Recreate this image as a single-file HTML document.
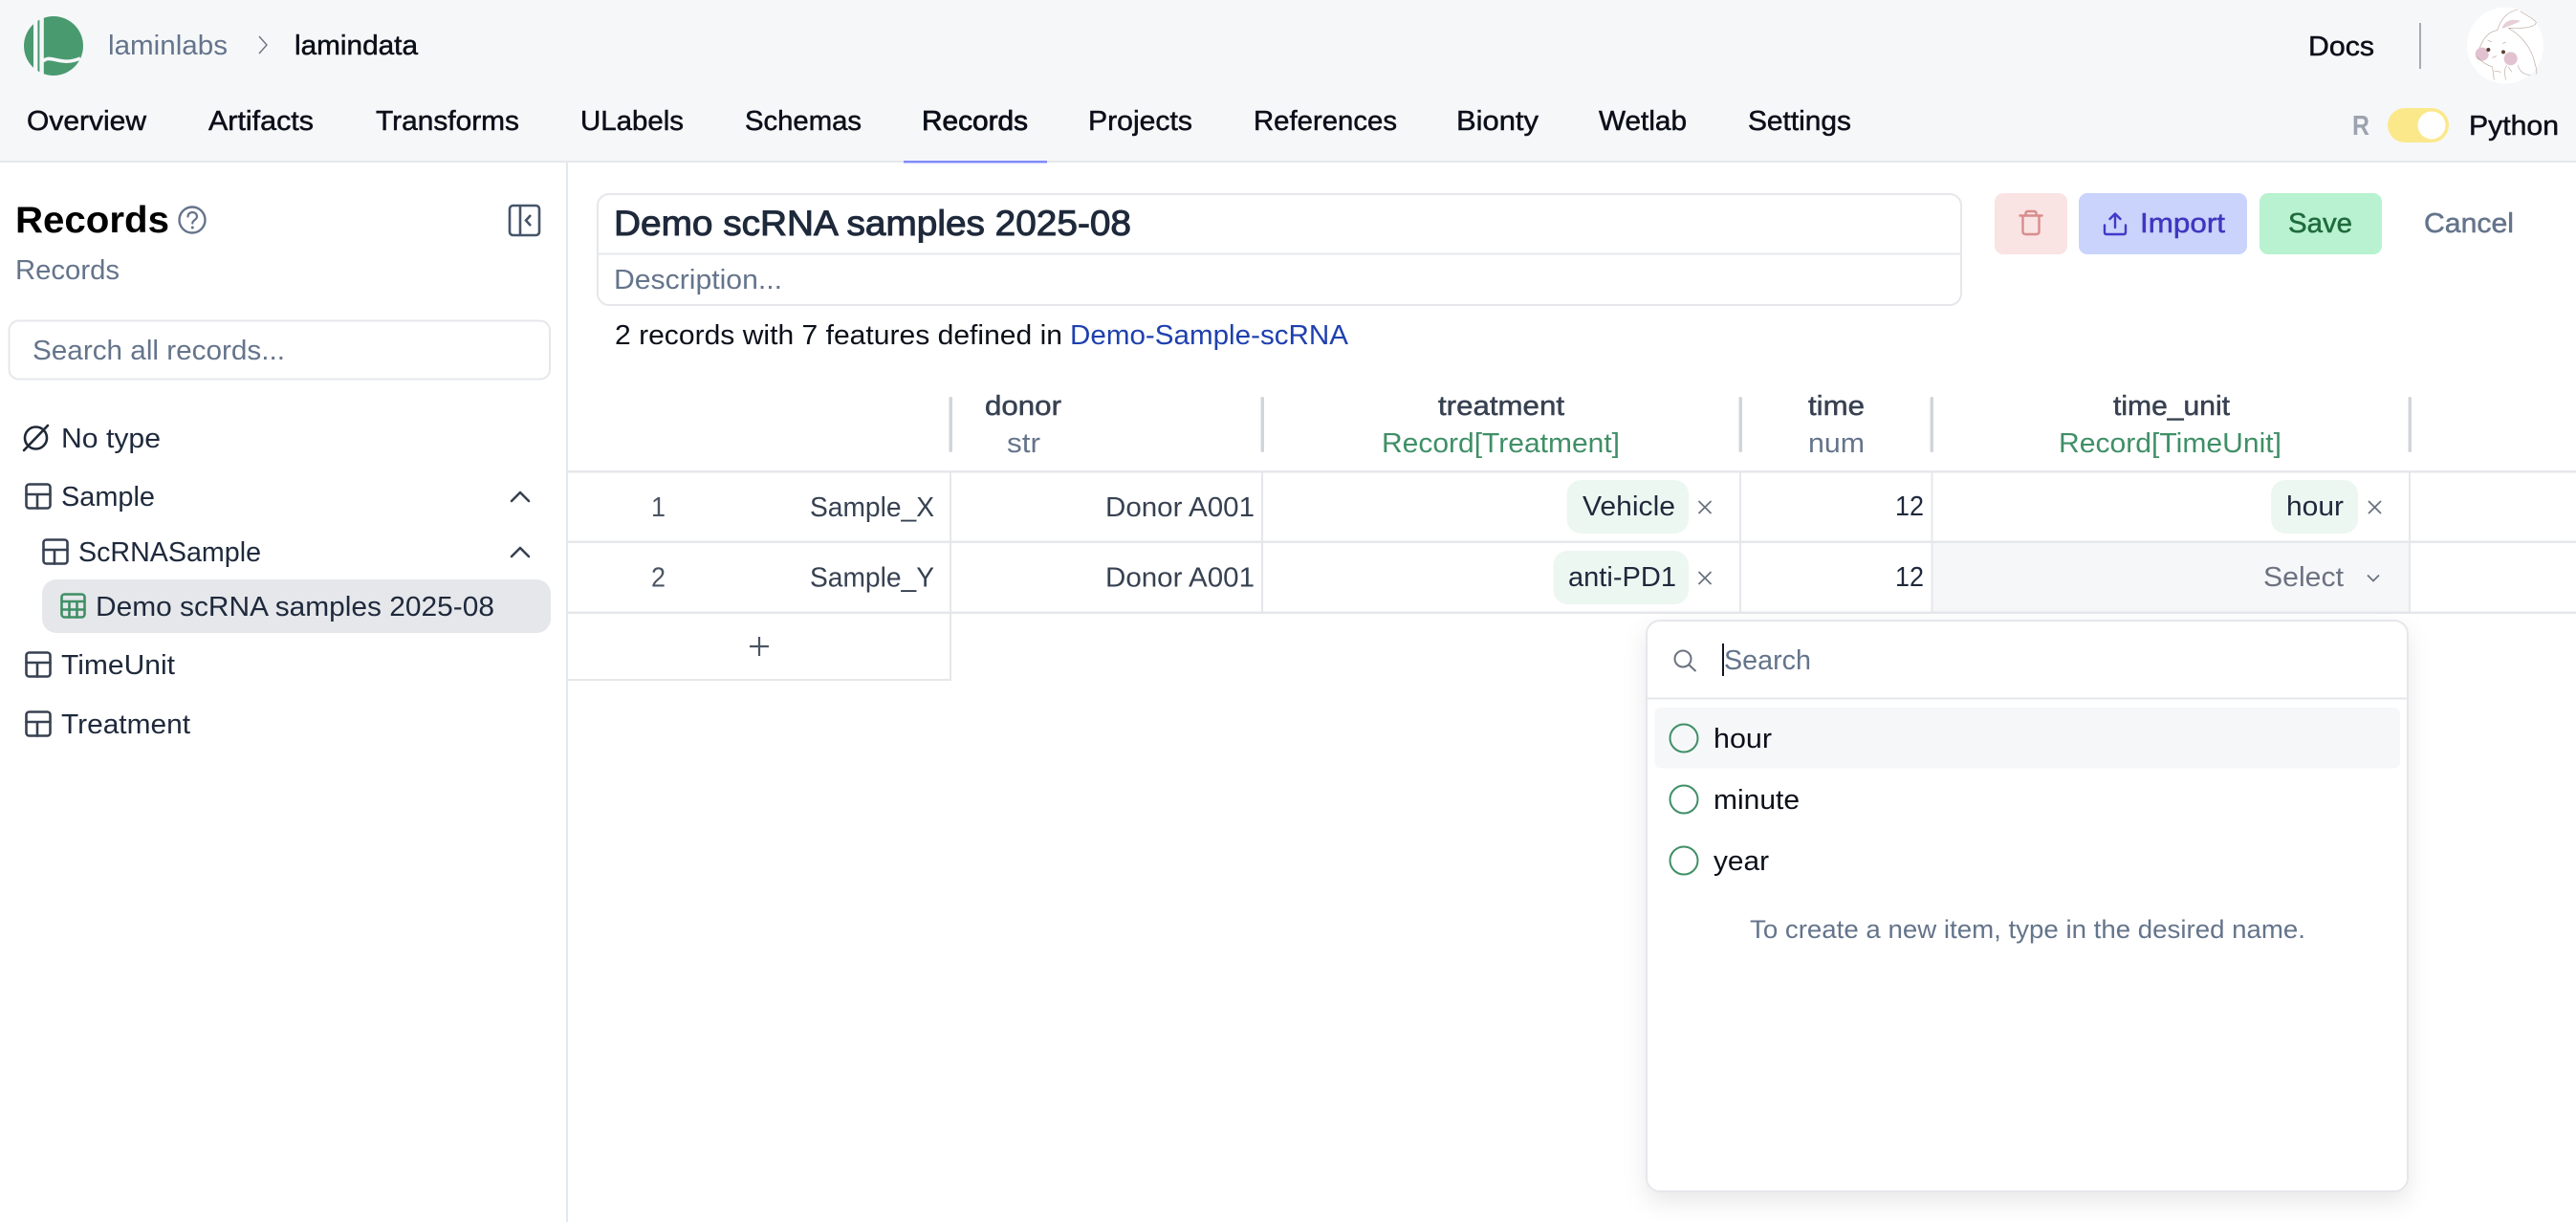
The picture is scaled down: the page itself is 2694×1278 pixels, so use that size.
<!DOCTYPE html>
<html lang="en">
<head>
<meta charset="utf-8">
<title>Records</title>
<style>
html,body{margin:0;padding:0;background:#fff;width:2694px;height:1278px;overflow:hidden}
svg{display:block}
text{font-family:"Liberation Sans",sans-serif;font-size:29px;fill:#1e293b}
.m{stroke-width:.5px;paint-order:stroke}
.g{fill:#64748b}
.k{fill:#0b0f19}
.gr{fill:#3f8f66}
.ic{fill:none;stroke:#374151;stroke-width:2.6;stroke-linecap:round;stroke-linejoin:round}
</style>
</head>
<body>
<svg width="2694" height="1278" viewBox="0 0 2694 1278" xmlns="http://www.w3.org/2000/svg">
<rect width="2694" height="1278" fill="#fff"/>
<!-- header -->
<rect width="2694" height="169" fill="#f6f7f9"/>
<rect y="168" width="2694" height="2" fill="#e5e7eb"/>
<rect x="945" y="168" width="150" height="2.5" fill="#818cf8"/>
<!-- logo -->
<circle cx="56" cy="48" r="31" fill="#4a9a70"/>
<rect x="35" y="14" width="4.4" height="68" fill="#f6f7f9"/>
<rect x="41.4" y="14" width="4.4" height="68" fill="#f6f7f9"/>
<path d="M45 64 C53 56,63 70,84 61" fill="none" stroke="#f6f7f9" stroke-width="3.6"/>
<text x="113" y="57" textLength="125" lengthAdjust="spacingAndGlyphs" style="fill:#64748b">laminlabs</text>
<path d="M271 38 L279 47 L271 56" fill="none" stroke="#6b7280" stroke-width="1.4"/>
<text x="308" y="57" textLength="129" lengthAdjust="spacingAndGlyphs" class="k m" stroke="#0b0f19">lamindata</text>
<text x="28" y="136" textLength="125" lengthAdjust="spacingAndGlyphs" class="k m" stroke="#0b0f19">Overview</text>
<text x="218" y="136" textLength="110" lengthAdjust="spacingAndGlyphs" class="k m" stroke="#0b0f19">Artifacts</text>
<text x="393" y="136" textLength="150" lengthAdjust="spacingAndGlyphs" class="k m" stroke="#0b0f19">Transforms</text>
<text x="607" y="136" textLength="108" lengthAdjust="spacingAndGlyphs" class="k m" stroke="#0b0f19">ULabels</text>
<text x="779" y="136" textLength="122" lengthAdjust="spacingAndGlyphs" class="k m" stroke="#0b0f19">Schemas</text>
<text x="964" y="136" textLength="111" lengthAdjust="spacingAndGlyphs" class="k" stroke="#0b0f19" stroke-width=".8">Records</text>
<text x="1138" y="136" textLength="109" lengthAdjust="spacingAndGlyphs" class="k m" stroke="#0b0f19">Projects</text>
<text x="1311" y="136" textLength="150" lengthAdjust="spacingAndGlyphs" class="k m" stroke="#0b0f19">References</text>
<text x="1523" y="136" textLength="86" lengthAdjust="spacingAndGlyphs" class="k m" stroke="#0b0f19">Bionty</text>
<text x="1672" y="136" textLength="92" lengthAdjust="spacingAndGlyphs" class="k m" stroke="#0b0f19">Wetlab</text>
<text x="1828" y="136" textLength="108" lengthAdjust="spacingAndGlyphs" class="k m" stroke="#0b0f19">Settings</text>
<text x="2414" y="58" textLength="69" lengthAdjust="spacingAndGlyphs" class="k m" stroke="#0b0f19">Docs</text>
<rect x="2530" y="24" width="2" height="48" fill="#a8abb2"/>
<!-- avatar -->
<g transform="translate(2560 0) scale(.33333)">
<circle cx="180" cy="143" r="120" fill="#fff"/>
<path d="M170 90 C174 70 196 55 228 66 C218 72 196 80 170 90Z" fill="#e6cfd9"/>
<circle cx="107" cy="170" r="21" fill="#e2c2d0"/>
<circle cx="197" cy="184" r="21" fill="#e2c2d0"/>
<circle cx="127" cy="156" r="6" fill="#5b4032"/>
<circle cx="174" cy="163" r="6" fill="#5b4032"/>
<path d="M155 95 C165 65 180 40 218 30 M228 36 C250 50 270 60 277 70 C275 85 240 90 190 88 C230 110 262 150 272 195 C278 215 280 228 278 232 M155 95 C130 98 112 118 100 150 M92 178 C105 195 125 205 140 210 M140 212 L145 250 M145 222 L166 226 M185 205 C178 215 176 225 182 250 M190 210 L200 225 M220 205 C225 225 240 235 258 235 M125 126 L136 131 M172 136 L181 133 M140 181 L152 176" fill="none" stroke="#b5a297" stroke-width="1.8" stroke-linecap="round"/>
</g>
<!-- toggle -->
<text x="2460" y="141" textLength="18" lengthAdjust="spacingAndGlyphs" font-weight="700" style="fill:#9ca3af">R</text>
<rect x="2497" y="113" width="64" height="36" rx="18" fill="#fbe88a"/>
<circle cx="2543" cy="131" r="14.5" fill="#fff"/>
<text x="2582" y="141" textLength="94" lengthAdjust="spacingAndGlyphs" class="k m" stroke="#0b0f19">Python</text>

<!-- sidebar -->
<rect x="592" y="170" width="2" height="1108" fill="#e2e8f0"/>
<text x="16" y="243" textLength="161" lengthAdjust="spacingAndGlyphs" font-weight="700" style="font-size:39px;fill:#000">Records</text>
<circle cx="201" cy="230" r="13.5" fill="none" stroke="#64748b" stroke-width="2.4"/>
<path d="M196.5 226.5 C196.5 220.5 206 220.5 206 226.5 C206 230 201.3 230 201.3 233.5" fill="none" stroke="#64748b" stroke-width="2.2" stroke-linecap="round"/>
<circle cx="201.3" cy="238" r="1.5" fill="#64748b"/>
<rect x="533" y="215" width="31" height="31" rx="3.5" fill="none" stroke="#475569" stroke-width="2.6"/>
<path d="M544 215 V246" stroke="#475569" stroke-width="2.6"/>
<path d="M555 225 L550 230.500 L555 236" fill="none" stroke="#475569" stroke-width="2.6"/>
<text x="16" y="292" textLength="109" lengthAdjust="spacingAndGlyphs" class="g">Records</text>
<rect x="9.500" y="335.500" width="565.500" height="61" rx="10" fill="#fff" stroke="#e5e7eb" stroke-width="2"/>
<text x="34" y="376" textLength="264" lengthAdjust="spacingAndGlyphs" class="g">Search all records...</text>

<circle cx="37.500" cy="458" r="11.500" fill="none" stroke="#1f2937" stroke-width="2.6"/>
<path d="M25 471 L50 445" stroke="#1f2937" stroke-width="2.6" stroke-linecap="round"/>
<text x="64" y="468" textLength="104" lengthAdjust="spacingAndGlyphs">No type</text>

<g class="ic"><rect x="27.500" y="506.500" width="25" height="25" rx="3"/><path d="M27.500 517 H52.500 M39 517 V531.500"/></g>
<text x="64" y="529" textLength="98" lengthAdjust="spacingAndGlyphs">Sample</text>
<path d="M535 524 L544 515 L553 524" fill="none" stroke="#374151" stroke-width="2.600" stroke-linecap="round" stroke-linejoin="round"/>

<g class="ic"><rect x="45.500" y="564.500" width="25" height="25" rx="3"/><path d="M45.500 575 H70.500 M57 575 V589.500"/></g>
<text x="82" y="587" textLength="191" lengthAdjust="spacingAndGlyphs">ScRNASample</text>
<path d="M535 582 L544 573 L553 582" fill="none" stroke="#374151" stroke-width="2.600" stroke-linecap="round" stroke-linejoin="round"/>

<rect x="44" y="606" width="532" height="56" rx="15" fill="#e5e7eb"/>
<g class="ic" style="stroke:#3f8f66"><rect x="64.500" y="621.500" width="24" height="24" rx="3"/><path d="M64.500 629 H88.500 M64.500 637.500 H88.500 M72.500 629 V645.500 M80.500 629 V645.500"/></g>
<text x="100" y="644" textLength="417" lengthAdjust="spacingAndGlyphs">Demo scRNA samples 2025-08</text>

<g class="ic"><rect x="27.500" y="682.500" width="25" height="25" rx="3"/><path d="M27.500 693 H52.500 M39 693 V707.500"/></g>
<text x="64" y="705" textLength="119" lengthAdjust="spacingAndGlyphs">TimeUnit</text>
<g class="ic"><rect x="27.500" y="744.500" width="25" height="25" rx="3"/><path d="M27.500 755 H52.500 M39 755 V769.500"/></g>
<text x="64" y="767" textLength="135" lengthAdjust="spacingAndGlyphs">Treatment</text>

<!-- title box -->
<rect x="625" y="203" width="1426" height="116" rx="12" fill="#fff" stroke="#e5e7eb" stroke-width="2"/>
<rect x="625" y="264.500" width="1426" height="2" fill="#e5e7eb"/>
<text x="642" y="246" textLength="541" lengthAdjust="spacingAndGlyphs" stroke="#1e293b" stroke-width="1" style="font-size:37px">Demo scRNA samples 2025-08</text>
<text x="642" y="302" textLength="176" lengthAdjust="spacingAndGlyphs" class="g">Description...</text>
<text x="643" y="360" textLength="468" lengthAdjust="spacingAndGlyphs" style="fill:#0b0f19">2 records with 7 features defined in</text>
<text x="1119" y="360" textLength="291" lengthAdjust="spacingAndGlyphs" style="fill:#1e40af">Demo-Sample-scRNA</text>

<!-- buttons -->
<rect x="2086" y="202" width="76" height="64" rx="9" fill="#f9e3e3"/>
<path d="M2112.500 225.500 H2135.500 M2115.500 225.500 V242 Q2115.500 245 2118.500 245 H2129.500 Q2132.500 245 2132.500 242 V225.500 M2118.500 225 V223.500 Q2118.500 221 2121 221 H2127 Q2129.500 221 2129.500 223.500 V225" fill="none" stroke="#d98c8c" stroke-width="2.400" stroke-linecap="round"/>
<rect x="2174" y="202" width="176" height="64" rx="9" fill="#c9d3fb"/>
<path d="M2201 235.500 V243 Q2201 245 2203 245 H2221 Q2223 245 2223 243 V235.500 M2212 238 V224 M2206.500 229 L2212 223.500 L2217.500 229" fill="none" stroke="#4338ca" stroke-width="2.400" stroke-linecap="round" stroke-linejoin="round"/>
<text x="2238" y="243" textLength="89" lengthAdjust="spacingAndGlyphs" class="m" stroke="#3f36c0" style="fill:#3f36c0">Import</text>
<rect x="2363" y="202" width="128" height="64" rx="9" fill="#b8f2d0"/>
<text x="2393" y="243" textLength="67" lengthAdjust="spacingAndGlyphs" class="m" stroke="#1f6b3c" style="fill:#1f6b3c">Save</text>
<text x="2535" y="243" textLength="94" lengthAdjust="spacingAndGlyphs" class="m" stroke="#64748b" style="fill:#64748b">Cancel</text>

<!-- table header -->
<g fill="#d1d5db">
<rect x="992.500" y="415" width="3.500" height="58" rx="1.500"/>
<rect x="1318.500" y="415" width="3.500" height="58" rx="1.500"/>
<rect x="1818.500" y="415" width="3.500" height="58" rx="1.500"/>
<rect x="2018.500" y="415" width="3.500" height="58" rx="1.500"/>
<rect x="2518.500" y="415" width="3.500" height="58" rx="1.500"/>
</g>
<text x="1030" y="434" textLength="80" lengthAdjust="spacingAndGlyphs" class="m" stroke="#374151" style="fill:#374151">donor</text>
<text x="1053" y="473" textLength="35" lengthAdjust="spacingAndGlyphs" class="g">str</text>
<text x="1504" y="434" textLength="132" lengthAdjust="spacingAndGlyphs" class="m" stroke="#374151" style="fill:#374151">treatment</text>
<text x="1445" y="473" textLength="249" lengthAdjust="spacingAndGlyphs" class="gr">Record[Treatment]</text>
<text x="1891" y="434" textLength="59" lengthAdjust="spacingAndGlyphs" class="m" stroke="#374151" style="fill:#374151">time</text>
<text x="1891" y="473" textLength="59" lengthAdjust="spacingAndGlyphs" class="g">num</text>
<text x="2210" y="434" textLength="122" lengthAdjust="spacingAndGlyphs" class="m" stroke="#374151" style="fill:#374151">time_unit</text>
<text x="2153" y="473" textLength="233" lengthAdjust="spacingAndGlyphs" class="gr">Record[TimeUnit]</text>

<!-- table grid -->
<rect x="2021" y="567" width="499" height="73" fill="#f6f7f9"/>
<g fill="#e5e7eb">
<rect x="594" y="492" width="2100" height="2.500"/>
<rect x="594" y="565.500" width="2100" height="2.500"/>
<rect x="594" y="639.500" width="2100" height="2.500"/>
<rect x="594" y="710" width="400" height="2"/>
<rect x="993" y="494" width="2" height="218"/>
<rect x="1319" y="494" width="2" height="146"/>
<rect x="1819" y="494" width="2" height="146"/>
<rect x="2019.500" y="494" width="2" height="146"/>
<rect x="2519" y="494" width="2" height="146"/>
</g>

<!-- rows -->
<text x="681" y="540" textLength="15" lengthAdjust="spacingAndGlyphs" style="fill:#4b5563">1</text>
<text x="847" y="540" textLength="130" lengthAdjust="spacingAndGlyphs" style="fill:#374151">Sample_X</text>
<text x="1156" y="540" textLength="156" lengthAdjust="spacingAndGlyphs" style="fill:#374151">Donor A001</text>
<text x="681" y="613.500" textLength="15" lengthAdjust="spacingAndGlyphs" style="fill:#4b5563">2</text>
<text x="847" y="613.500" textLength="130" lengthAdjust="spacingAndGlyphs" style="fill:#374151">Sample_Y</text>
<text x="1156" y="613.500" textLength="156" lengthAdjust="spacingAndGlyphs" style="fill:#374151">Donor A001</text>
<path d="M794 666 V686 M784 676 H804" stroke="#4b5563" stroke-width="2.200"/>

<rect x="1638.500" y="502" width="127.500" height="56" rx="15" fill="#edf7f2"/>
<text x="1655" y="539" textLength="97" lengthAdjust="spacingAndGlyphs">Vehicle</text>
<path d="M1776.500 524 L1789.500 537 M1789.500 524 L1776.500 537" stroke="#6b7280" stroke-width="1.800"/>
<text x="1982" y="539" textLength="30" lengthAdjust="spacingAndGlyphs">12</text>
<rect x="2375" y="502" width="91" height="56" rx="15" fill="#edf7f2"/>
<text x="2391" y="539" textLength="60" lengthAdjust="spacingAndGlyphs">hour</text>
<path d="M2477 524 L2490 537 M2490 524 L2477 537" stroke="#6b7280" stroke-width="1.800"/>

<rect x="1624.500" y="576" width="141.500" height="56" rx="15" fill="#edf7f2"/>
<text x="1640" y="613" textLength="113" lengthAdjust="spacingAndGlyphs">anti-PD1</text>
<path d="M1776.500 598 L1789.500 611 M1789.500 598 L1776.500 611" stroke="#6b7280" stroke-width="1.800"/>
<text x="1982" y="613" textLength="30" lengthAdjust="spacingAndGlyphs">12</text>
<text x="2367" y="613" textLength="84" lengthAdjust="spacingAndGlyphs" style="fill:#6b7280">Select</text>
<path d="M2476 601.500 L2482 607.500 L2488 601.500" fill="none" stroke="#6b7280" stroke-width="1.800"/>

<!-- dropdown -->
<defs>
<filter id="sh" x="-10%" y="-10%" width="120%" height="120%">
<feDropShadow dx="0" dy="10" stdDeviation="12" flood-color="#000" flood-opacity=".09"/>
</filter>
</defs>
<rect x="1722" y="649" width="796" height="597" rx="14" fill="#fff" stroke="#e5e7eb" stroke-width="2" filter="url(#sh)"/>
<rect x="1722" y="729.500" width="796" height="2" fill="#e5e7eb"/>
<circle cx="1760" cy="689" r="8.500" fill="none" stroke="#6b7280" stroke-width="2"/>
<path d="M1766.500 695.500 L1773.500 702" stroke="#6b7280" stroke-width="2"/>
<rect x="1801" y="673" width="2" height="34" fill="#111827"/>
<text x="1803" y="700" textLength="91" lengthAdjust="spacingAndGlyphs" class="g">Search</text>
<rect x="1730.500" y="740" width="779.500" height="63.500" rx="6" fill="#f6f7f9"/>
<circle cx="1761" cy="772" r="14.500" fill="none" stroke="#3f8f66" stroke-width="2"/>
<text x="1792" y="782" textLength="61" lengthAdjust="spacingAndGlyphs" class="k">hour</text>
<circle cx="1761" cy="836" r="14.500" fill="none" stroke="#3f8f66" stroke-width="2"/>
<text x="1792" y="846" textLength="90" lengthAdjust="spacingAndGlyphs" class="k">minute</text>
<circle cx="1761" cy="900" r="14.500" fill="none" stroke="#3f8f66" stroke-width="2"/>
<text x="1792" y="910" textLength="58" lengthAdjust="spacingAndGlyphs" class="k">year</text>
<text x="1830" y="981" textLength="581" lengthAdjust="spacingAndGlyphs" class="g" style="font-size:27px">To create a new item, type in the desired name.</text>
</svg>
</body>
</html>
